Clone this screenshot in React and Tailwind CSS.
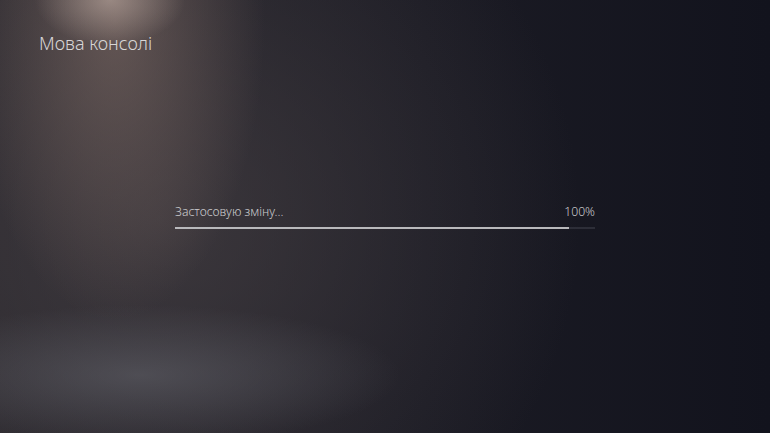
export default function App() {
  return (
    <div
      className="h-[433px] w-full overflow-hidden flex flex-col bg-[#171821] bg-[radial-gradient(ellipse_75px_45px_at_110px_0px,rgba(200,180,170,0.55),transparent),radial-gradient(ellipse_150px_300px_at_115px_20px,rgba(140,118,110,0.55),transparent),radial-gradient(ellipse_260px_70px_at_140px_375px,rgba(105,106,114,0.5),transparent),radial-gradient(ellipse_420px_420px_at_160px_220px,rgba(70,64,68,0.7),transparent),linear-gradient(to_right,#29272d,#1b1b24_55%,#12131d)]"
      style={{ fontFamily: '"Noto Sans", "Open Sans", sans-serif' }}
    >
      {/* Header */}
      <h1 className="pl-[39px] pt-[31px] text-[18px] leading-[24px] text-[#d8d6d6] font-light">
        Мова консолі
      </h1>

      {/* Progress */}
      <div className="mx-auto mt-[150px] w-[420px]">
        <div className="flex items-center justify-between text-[12.2px] leading-[14px] text-[#cbcbce] font-light">
          <span>Застосовую зміну...</span>
          <span>100%</span>
        </div>
        <div className="mt-[8px] h-[2px] w-full bg-[#2d2e38]">
          <div className="h-full w-[93.8%] bg-[#b9b9bc]" />
        </div>
      </div>
    </div>
  );
}
